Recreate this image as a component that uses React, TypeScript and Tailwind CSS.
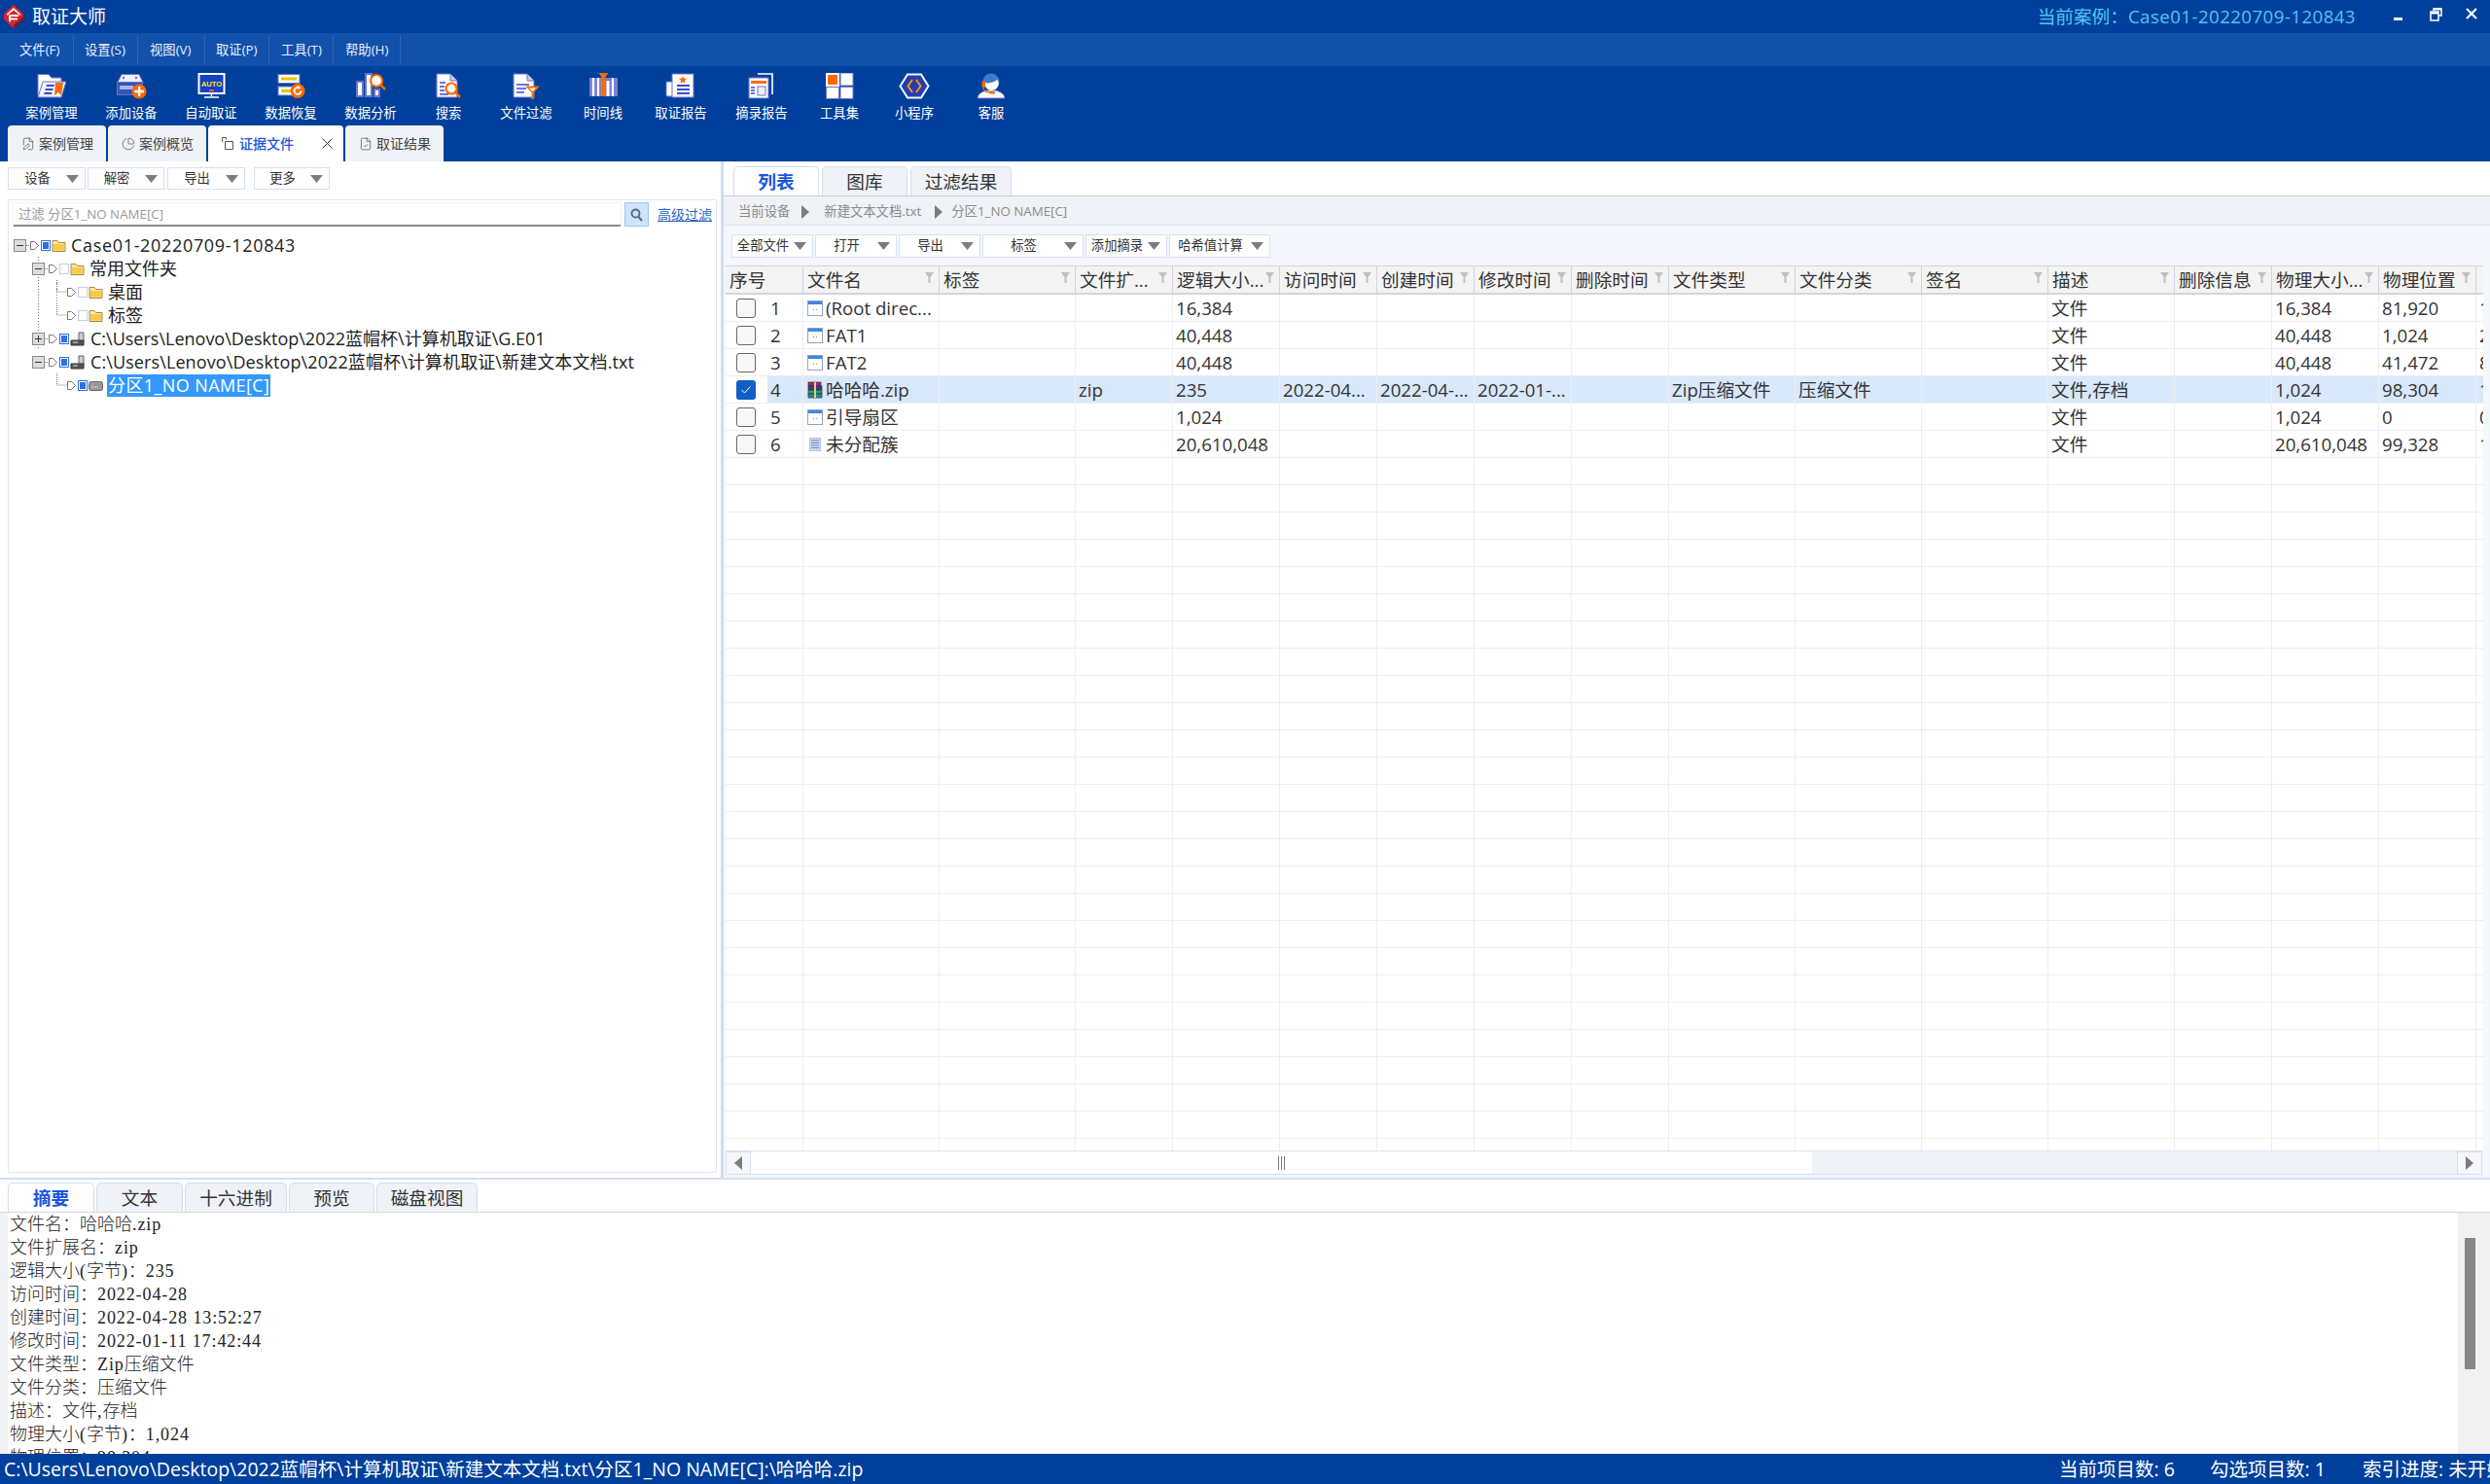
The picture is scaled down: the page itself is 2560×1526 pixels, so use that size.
import React from "react";
import { ChartPie, FilePen, FileCheck, X } from "lucide-react";

const P = "#6b74c8";
const O = "#ff6a00";

function Logo() {
  return (
    <svg width="22" height="24" viewBox="0 0 22 24">
      <path d="M11 0 L21 9 L21 15 L11 24 L1 15 L1 9 Z" fill="#d9232e" />
      <path d="M11 3 L18 9.5 L18 11 L11 5.5 L4 11 L4 9.5 Z" fill="#fff" />
      <path d="M6 10h10v2H8v1.6h7v2H8V18L6 16.4z" fill="#fff" />
      <path d="M11 24 L21 15 L21 12 L11 21Z" fill="#8e1219" />
    </svg>
  );
}

const Ic = ({ children }: { children: React.ReactNode }) => (
  <svg width="32" height="27" viewBox="0 0 32 27" className="shrink-0">{children}</svg>
);

const toolIcons: React.ReactNode[] = [
  <Ic key="1">
    <path d="M2 1.500h11l3 3.500h10v19H2z" fill="#fff" stroke={P} />
    <path d="M7 9h24l-5 16H2z" fill="#f2f3ff" stroke={P} />
    <path d="M11 12h8l-.6 2h-8zM9.800 16h8l-.6 2h-8zM8.600 20h8l-.6 2h-8z" fill="#3a4cd0" />
    <path d="M20 10h8l-2 13-3-3-4 3z" fill={O} />
  </Ic>,
  <Ic key="2">
    <path d="M6 1.500h18l4 8H2z" fill="#eef0fb" stroke={P} />
    <rect x="1.500" y="9.500" width="26" height="13" fill="#3254b8" stroke={P} />
    <rect x="4" y="13" width="14" height="4" fill="#aab4e8" />
    <circle cx="8" cy="5" r="1.200" fill={P} /><circle cx="21" cy="5" r="1.200" fill={P} />
    <circle cx="24" cy="19" r="7.500" fill={O} />
    <path d="M23 14h2.400v3.800H29v2.400h-3.600V24H23v-3.800h-3.600v-2.400H23z" fill="#fff" />
  </Ic>,
  <Ic key="3">
    <rect x="3.500" y="1" width="26" height="20" fill="#1740c8" stroke="#fff" strokeWidth="2" />
    <text x="16.500" y="13.500" textAnchor="middle" fontSize="7.500" fontWeight="700" fill="#ffe600" fontFamily="Liberation Sans, sans-serif">AUTO</text>
    <rect x="14" y="17" width="5" height="2" fill={O} />
    <path d="M16.500 22v2M9 25h15" stroke="#fff" strokeWidth="1.500" />
  </Ic>,
  <Ic key="4">
    <rect x="3" y="1.500" width="22" height="9" fill="#fff" stroke={P} />
    <rect x="6" y="4.500" width="16" height="3" fill="#e3c800" />
    <rect x="3" y="14" width="22" height="9" fill="#fff" stroke={P} />
    <rect x="6" y="17" width="10" height="3" fill="#e3c800" />
    <circle cx="23" cy="18.500" r="7.500" fill={O} />
    <path d="M26.500 18.500a3.500 3.500 0 1 1-2-3.200" fill="none" stroke="#fff" strokeWidth="1.800" />
    <path d="M23 12.500l3.500 3-4 1.200z" fill="#fff" />
  </Ic>,
  <Ic key="5">
    <rect x="2" y="9" width="6" height="15" fill="#fff" stroke={P} strokeWidth="2" />
    <rect x="11" y="1" width="6" height="23" fill="#fff" stroke={P} strokeWidth="2" />
    <rect x="20" y="17" width="5" height="7" fill="#fff" stroke={P} strokeWidth="2" />
    <circle cx="22" cy="8" r="6" fill="#fff" stroke={O} strokeWidth="2.200" />
    <path d="M26.500 12.500L31 17" stroke={O} strokeWidth="2.500" />
  </Ic>,
  <Ic key="6">
    <path d="M4 1h14l7 7v17H4z" fill="#fff" stroke={P} />
    <path d="M18 1v7h7" fill="#c9cdf0" stroke={P} />
    <path d="M7 10h6M7 14h5M7 18h5M7 22h9" stroke="#3a4cd0" strokeWidth="1.500" />
    <circle cx="19" cy="16" r="5.500" fill="#fff" stroke={O} strokeWidth="2.200" />
    <path d="M23 20l5 5" stroke={O} strokeWidth="2.500" />
  </Ic>,
  <Ic key="7">
    <path d="M3 1h14l7 7v17H3z" fill="#fff" stroke={P} />
    <path d="M17 1v7h7" fill="#c9cdf0" stroke={P} />
    <path d="M6 12h13M6 16h10M6 20h8" stroke="#3a4cd0" strokeWidth="1.600" />
    <path d="M15 13.500h15l-6 6.500v7h-2.500v-7z" fill={O} />
    <path d="M19 15.500h7l-3.500 3.500z" fill="#fff" />
  </Ic>,
  <Ic key="8">
    <rect x="2" y="5" width="29" height="19" fill="#7680cc" />
    <path d="M6 5v19M11 5v19M16 5v19M26 5v19" stroke="#fff" strokeWidth="2.200" />
    <path d="M11.500 0h10l-3.500 5h-3z" fill={O} />
    <rect x="15" y="4" width="3" height="20" fill={O} />
    <path d="M21 8v16" stroke="#fff" strokeWidth="3" />
  </Ic>,
  <Ic key="9">
    <rect x="1" y="9" width="8" height="15" rx="1" fill="#fff" stroke={P} />
    <rect x="7" y="1" width="22" height="24" fill="#fff" stroke={P} />
    <path d="M18 3l1.200 2.600 2.800.3-2 1.900.5 2.800-2.500-1.400-2.500 1.400.5-2.800-2-1.900 2.800-.3z" fill={O} />
    <path d="M12 13h13M12 17h13M12 21h13" stroke="#3a4cd0" strokeWidth="1.800" />
  </Ic>,
  <Ic key="10">
    <path d="M12 1h15v21" fill="none" stroke="#fff" strokeWidth="1.600" />
    <rect x="3" y="5" width="20" height="21" fill="#fff" stroke={P} />
    <rect x="5" y="8" width="16" height="3" fill={O} />
    <path d="M5 15h4M5 18h4M5 21h4" stroke="#3a4cd0" strokeWidth="1.600" />
    <rect x="12" y="14" width="8" height="9" fill="#eef" stroke={P} />
  </Ic>,
  <Ic key="11">
    <rect x="3" y="1" width="12" height="12" fill={O} stroke="#fff" strokeWidth="2" />
    <rect x="17" y="0" width="13" height="13" fill="#fff" stroke={P} />
    <rect x="2.500" y="14.500" width="13" height="12" fill="#fff" stroke={P} />
    <rect x="17" y="14.500" width="13" height="12" fill="#fff" stroke={P} />
  </Ic>,
  <Ic key="12">
    <path d="M9 1.500h14l7.500 12-7.500 12H9l-7.500-12z" fill="#2a3bb0" stroke="#e9fbff" strokeWidth="2" />
    <path d="M14 7l-4.500 6.500L14 20M18 7l4.500 6.500L18 20" fill="none" stroke="#f0a010" strokeWidth="1.800" />
  </Ic>,
  <Ic key="13">
    <path d="M2 26c.5-6 7-7 9-8h10c2 1 8.500 2 9 8z" fill="#fff" stroke={P} />
    <circle cx="16" cy="9" r="8.500" fill="#3f79d0" />
    <path d="M10 10c3 1 9 0 12-3 1.500 1 2 3 1.700 5-.5 3-3.500 6-7.700 6s-6.500-4-6-8z" fill="#fff" />
    <rect x="6.500" y="8" width="3.500" height="7" rx="1.500" fill={O} />
    <path d="M8 15c0 4 3 5 7 5" fill="none" stroke={O} strokeWidth="1.300" />
    <rect x="14" y="19" width="6" height="2.500" rx="1" fill={O} />
  </Ic>,
];

const tools = [
  { t: "案例管理", w: "w-[82px]" }, { t: "添加设备", w: "w-[82px]" }, { t: "自动取证", w: "w-[82px]" },
  { t: "数据恢复", w: "w-[82px]" }, { t: "数据分析", w: "w-[82px]" }, { t: "搜索", w: "w-[78px]" },
  { t: "文件过滤", w: "w-[82px]" }, { t: "时间线", w: "w-[76px]" }, { t: "取证报告", w: "w-[84px]" },
  { t: "摘录报告", w: "w-[82px]" }, { t: "工具集", w: "w-[78px]" }, { t: "小程序", w: "w-[76px]" }, { t: "客服", w: "w-[82px]" },
];

const menus = [
  { t: "文件(F)", c: "w-[76px] pl-[20px]" }, { t: "设置(S)", c: "w-[66px] pl-[11px]" }, { t: "视图(V)", c: "w-[69px] pl-[12px]" },
  { t: "取证(P)", c: "w-[66px] pl-[11px]" }, { t: "工具(T)", c: "w-[66px] pl-[12px]" }, { t: "帮助(H)", c: "w-[69px] pl-[12px]" },
];

const Tri = ({ dir = "down" }: { dir?: "down" | "left" | "right" }) => {
  if (dir === "down")
    return <svg width="13" height="8" viewBox="0 0 13 8" className="shrink-0"><path d="M0 0h13L6.500 8z" fill="#7c7c7c" /></svg>;
  if (dir === "right")
    return <svg width="8" height="14" viewBox="0 0 8 14" className="shrink-0"><path d="M0 0l8 7-8 7z" fill="#7c7c7c" /></svg>;
  return <svg width="8" height="14" viewBox="0 0 8 14" className="shrink-0"><path d="M8 0L0 7l8 7z" fill="#7c7c7c" /></svg>;
};

function DropBtn({ t, c }: { t: string; c: string }) {
  return (
    <div className={`flex items-center bg-white border border-[#d6e0f0] text-[13.330px] text-[#333] pr-[6px] ${c}`}>
      <span className="flex-1 text-center whitespace-nowrap">{t}</span>
      <Tri />
    </div>
  );
}

function Folder() {
  return (
    <svg width="15" height="13" viewBox="0 0 15 13" className="shrink-0">
      <path d="M1 1.500h5l1.500 2H14v9H1z" fill="#fde9a0" stroke="#a68a3a" />
      <path d="M2 5h11v6.500H2z" fill="#f8c94e" />
    </svg>
  );
}
function Drive() {
  return (
    <svg width="16" height="15" viewBox="0 0 16 15" className="shrink-0">
      <path d="M9 1h5v9H9z" fill="#c9ccd4" stroke="#666" />
      <path d="M1 9h13v5H1z" fill="#555" stroke="#333" />
      <path d="M3 11h5" stroke="#ddd" />
    </svg>
  );
}
function Part() {
  return (
    <svg width="15" height="13" viewBox="0 0 15 13" className="shrink-0">
      <rect x="0.500" y="2.500" width="14" height="9" rx="2" fill="#9a9a9a" stroke="#666" />
      <path d="M3 8h8" stroke="#eee" strokeDasharray="1 1" />
    </svg>
  );
}

const Check = ({ on }: { on: boolean }) => (
  <span className={`shrink-0 w-[10px] h-[11px] border flex items-center justify-center ${on ? "border-[#2f6fe8]" : "border-[#bcd0f5]"} bg-white`}>
    {on ? <span className="w-[6px] h-[7px] bg-[#2f6fe8]" /> : null}
  </span>
);

function Conn({ level, exp, vlines }: { level: number; exp?: "-" | "+"; vlines: number[] }) {
  // x coordinates below are page coordinates, the svg starts at x = 9
  const ex = 14 + level * 19;
  const ax = level === 2 ? 69 : 31 + level * 19;
  return (
    <svg width={ax + 10 - 9} height="24" viewBox={`9 0 ${ax + 10 - 9} 24`} className="shrink-0">
      {vlines.map((v) => (
        <path key={v} d={`M${v + 0.5} 0V24`} stroke="#777" strokeDasharray="1 2" fill="none" />
      ))}
      {level === 2 ? <path d={`M58.500 0V12H69`} stroke="#777" strokeDasharray="1 1" fill="none" /> : null}
      {exp ? (
        <g>
          <rect x={ex + 0.5} y="6.500" width="12" height="12" fill="#dcdcdc" stroke="#8a8a8a" />
          <path d={`M${ex + 3} 12.500h7`} stroke="#333" />
          {exp === "+" ? <path d={`M${ex + 6.500} 9v7`} stroke="#333" /> : null}
          <path d={`M${ex + 13} 12.500h4`} stroke="#777" strokeDasharray="1 1" />
        </g>
      ) : null}
      <path d={`M${ax + 0.5} 8.500h4l4 4-4 4h-4z`} fill="#fff" stroke="#777" />
    </svg>
  );
}

function TreeRow({ level, exp, on, icon, t, sel, vlines = [], tc = "" }: { level: number; exp?: "-" | "+"; on: boolean; icon: React.ReactNode; t: string; sel?: boolean; vlines?: number[]; tc?: string }) {
  return (
    <div className="h-[24px] flex items-center whitespace-nowrap text-[18px] text-[#222]">
      <Conn level={level} exp={exp} vlines={vlines} />
      <span className="ml-[1px] mr-[1px]"><Check on={on} /></span>
      {icon}
      <span className={`${sel ? "ml-[4px] pl-[1px] pr-[1px] h-[23px] leading-[23px] bg-[#3399ff] text-white" : "ml-[5px]"} ${tc}`}>{t}</span>
    </div>
  );
}

const cols = ["序号", "文件名", "标签", "文件扩...", "逻辑大小...", "访问时间", "创建时间", "修改时间", "删除时间", "文件类型", "文件分类", "签名", "描述", "删除信息", "物理大小...", "物理位置", ""];
const grid = "grid grid-cols-[80px_140px_140px_100px_110px_100px_100px_100px_100px_130px_130px_130px_130px_100px_110px_100px_100px]";

function Funnel() {
  return (
    <svg width="9" height="11" viewBox="0 0 9 11" className="shrink-0 -mt-[4px]"><path d="M0 0h9L5.500 5V11h-2V5z" fill="#c0c0c0" /></svg>
  );
}
function WinIcon() {
  return (
    <svg width="16" height="16" viewBox="0 0 16 16" className="shrink-0">
      <rect x="0.500" y="0.500" width="15" height="15" fill="#fff" stroke="#8da3c8" />
      <rect x="1" y="1" width="14" height="3" fill="#3f86e0" />
      <path d="M6 9h1v1H6zM9 9h1v1H9z" fill="#8a8a8a" />
    </svg>
  );
}
function ZipIcon() {
  return (
    <svg width="16" height="18" viewBox="0 0 16 18" className="shrink-0">
      <rect x="1" y="1" width="13" height="4" fill="#b01e6e" stroke="#333" strokeWidth="0.700" />
      <rect x="1" y="5" width="14" height="4" fill="#2a3eb0" stroke="#333" strokeWidth="0.700" />
      <rect x="1" y="9" width="14" height="4" fill="#2aa05a" stroke="#333" strokeWidth="0.700" />
      <rect x="1" y="13" width="14" height="4" fill="#1b8aa8" stroke="#333" strokeWidth="0.700" />
      <rect x="7" y="1" width="2" height="16" fill="#e8d070" />
    </svg>
  );
}
function UnallocIcon() {
  return (
    <svg width="16" height="16" viewBox="0 0 16 16" className="shrink-0">
      <rect x="2.500" y="1.500" width="11" height="13" fill="#cfd8ee" stroke="#b5c1dc" />
      <path d="M4 4h8M4 6.500h8M4 9h8M4 11.500h8" stroke="#6d86c4" />
    </svg>
  );
}

type Row = { n: number; name: string; icon: React.ReactNode; ext?: string; size: string; at?: string; ct?: string; mt?: string; type?: string; cat?: string; desc: string; ps: string; pp: string; last: string; sel?: boolean };
const rows: Row[] = [
  { n: 1, name: "(Root direc...", icon: <WinIcon />, size: "16,384", desc: "文件", ps: "16,384", pp: "81,920", last: "1" },
  { n: 2, name: "FAT1", icon: <WinIcon />, size: "40,448", desc: "文件", ps: "40,448", pp: "1,024", last: "2" },
  { n: 3, name: "FAT2", icon: <WinIcon />, size: "40,448", desc: "文件", ps: "40,448", pp: "41,472", last: "8" },
  { n: 4, name: "哈哈哈.zip", icon: <ZipIcon />, ext: "zip", size: "235", at: "2022-04...", ct: "2022-04-...", mt: "2022-01-...", type: "Zip压缩文件", cat: "压缩文件", desc: "文件,存档", ps: "1,024", pp: "98,304", last: "1", sel: true },
  { n: 5, name: "引导扇区", icon: <WinIcon />, size: "1,024", desc: "文件", ps: "1,024", pp: "0", last: "0" },
  { n: 6, name: "未分配簇", icon: <UnallocIcon />, size: "20,610,048", desc: "文件", ps: "20,610,048", pp: "99,328", last: "1" },
];

function Cell({ t, sel, last }: { t?: string; sel?: boolean; last?: boolean }) {
  return (
    <div className={`h-[28px] leading-[27px] pl-[3px] border-b border-[#eeeeee] whitespace-nowrap overflow-hidden ${last ? "" : "border-r"} ${sel ? "bg-[#d9e8fb]" : ""}`}>{t}</div>
  );
}

function DataRow({ r }: { r?: Row }) {
  const vals = r ? [r.ext, r.size, r.at, r.ct, r.mt, "", r.type, r.cat, "", r.desc, "", r.ps, r.pp, r.last] : new Array(14).fill("");
  const sel = r?.sel;
  return (
    <div className={grid}>
      <div className="h-[28px] flex border-b border-r border-[#eeeeee]">
        <div className="w-[43px] flex items-center pl-[11px]">
          {r ? (
            r.sel ? (
              <span className="w-[20px] h-[20px] rounded-[3px] bg-[#0f5fc4] flex items-center justify-center">
                <svg width="12" height="10" viewBox="0 0 12 10"><path d="M1.500 5l3 3 6-6.500" fill="none" stroke="#fff" strokeWidth="1" /></svg>
              </span>
            ) : (
              <span className="w-[20px] h-[20px] rounded-[3px] border border-[#666] bg-[#f8f8f8]" />
            )
          ) : null}
        </div>
        <div className={`flex-1 leading-[27px] pl-[3px] ${sel ? "bg-[#d9e8fb]" : ""}`}>{r?.n}</div>
      </div>
      <div className={`h-[28px] flex items-center pl-[4px] gap-[3px] border-b border-r border-[#eeeeee] whitespace-nowrap overflow-hidden ${sel ? "bg-[#d9e8fb]" : ""}`}>
        {r?.icon}
        <span>{r?.name}</span>
      </div>
      <Cell sel={sel} />
      {vals.map((v, i) => (
        <Cell key={i} t={v} sel={sel} last={i === 13} />
      ))}
    </div>
  );
}

function segs(s: string) {
  return s.split(/([\x00-\x7f]+)/).map((p, i) =>
    /^[\x00-\x7f]+$/.test(p) ? (
      <span key={i} className="font-['Liberation_Serif',serif] font-normal tracking-[0.9px] whitespace-pre">{p}</span>
    ) : (
      <span key={i}>{p}</span>
    )
  );
}

const info = [
  "文件名：哈哈哈.zip", "文件扩展名：zip", "逻辑大小(字节)：235", "访问时间：2022-04-28", "创建时间：2022-04-28 13:52:27",
  "修改时间：2022-01-11 17:42:44", "文件类型：Zip压缩文件", "文件分类：压缩文件", "描述：文件,存档", "物理大小(字节)：1,024", "物理位置：98,304",
];

function TopTab({ t, c, active }: { t: string; c: string; active?: boolean }) {
  return (
    <div className={`h-full flex items-center justify-center rounded-t-[5px] border border-b-0 border-[#d3deef] text-[18.670px] ${active ? "bg-white font-bold text-[#1a56e0] -mb-[1px] relative" : "bg-[#eff2f7] text-[#333]"} ${c}`}>{t}</div>
  );
}

export default function App() {
  return (
    <div className="w-[2560px] h-[1526px] flex flex-col overflow-hidden bg-white text-[#333] font-['Open_Sans','Noto_Sans_CJK_SC',sans-serif]">
      {/* title bar */}
      <div className="h-[34px] shrink-0 bg-[#00409c] flex items-center text-white">
        <div className="ml-[3px] w-[22px]"><Logo /></div>
        <span className="ml-[8px] text-[19px] leading-none">取证大师</span>
        <span className="ml-auto text-[18.670px] text-[#54c4f2] whitespace-nowrap">当前案例：<span className="tracking-[0.45px]">Case01-20220709-120843</span></span>
        <div className="ml-[39px] w-[9px] h-[3px] bg-white mt-[4px]" />
        <svg width="13" height="14" viewBox="0 0 13 14" className="ml-[28px] -mt-[4px]">
          <path d="M4 3V1h8v7h-3" fill="none" stroke="#fff" strokeWidth="1.500" />
          <rect x="1" y="4" width="8" height="9" fill="none" stroke="#fff" strokeWidth="1.500" />
          <path d="M1 5.500h8M4 1.500h8" stroke="#fff" strokeWidth="2" />
        </svg>
        <svg width="12" height="12" viewBox="0 0 12 12" className="ml-[24px] mr-[13px] -mt-[6px]">
          <path d="M1 1l10 10M11 1L1 11" stroke="#fff" strokeWidth="2" />
        </svg>
      </div>
      {/* menu */}
      <div className="h-[34px] shrink-0 bg-[#1150ab] flex items-center text-[13.330px] text-[#eaf0fb]">
        {menus.map((m) => (
          <div key={m.t} className={`h-[30px] leading-[30px] border-r border-[#2c64b8] ${m.c}`}>{m.t}</div>
        ))}
      </div>
      {/* toolbar */}
      <div className="h-[61px] shrink-0 bg-[#00409c] flex pl-[12px] text-[13.330px] text-white">
        {tools.map((t, i) => (
          <div key={t.t} className={`flex flex-col items-center pt-[7px] ${t.w}`}>
            {toolIcons[i]}
            <span className="mt-[4px] leading-[20px] whitespace-nowrap">{t.t}</span>
          </div>
        ))}
      </div>
      {/* tabs */}
      <div className="h-[37px] shrink-0 bg-[#00409c] flex items-end pl-[8px] gap-[2px] text-[14px]">
        <div className="h-[37px] w-[101px] rounded-t-[4px] bg-[#eff2f7] flex items-center pl-[14px] gap-[4px] text-[#444]">
          <FilePen size={14} strokeWidth={1.300} color="#555" /><span>案例管理</span>
        </div>
        <div className="h-[37px] w-[101px] rounded-t-[4px] bg-[#eff2f7] flex items-center pl-[14px] gap-[4px] text-[#444]">
          <ChartPie size={14} strokeWidth={1.300} color="#555" /><span>案例概览</span>
        </div>
        <div className="h-[37px] w-[139px] rounded-t-[4px] bg-white flex items-center pl-[14px] gap-[6px] text-[#1a56e0] font-medium">
          <svg width="12" height="13" viewBox="0 0 12 13" className="shrink-0"><path d="M.500 4.500V.500h4v2M3.500 4.500h8v8h-8z" fill="none" stroke="#555" /></svg>
          <span>证据文件</span>
          <X size={19} strokeWidth={1.200} color="#333" className="ml-[19px]" />
        </div>
        <div className="h-[37px] w-[101px] rounded-t-[4px] bg-[#eff2f7] flex items-center pl-[14px] gap-[4px] text-[#444]">
          <FileCheck size={14} strokeWidth={1.300} color="#555" /><span>取证结果</span>
        </div>
      </div>
      {/* main */}
      <div className="h-[1045px] shrink-0 flex">
        {/* left */}
        <div className="w-[741px] shrink-0 flex flex-col pl-[8px] pr-[4px] pt-[6px]">
          <div className="flex h-[23px]">
            <DropBtn t="设备" c="w-[80px]" />
            <DropBtn t="解密" c="w-[79px] ml-[2px]" />
            <DropBtn t="导出" c="w-[80px] ml-[3px]" />
            <DropBtn t="更多" c="w-[78px] ml-[9px]" />
          </div>
          <div className="mt-[10px] h-[1001px] border border-[#dfe7f2] rounded-[2px] flex flex-col">
            <div className="flex h-[25px] mt-[2px] ml-[4px] text-[13.330px]">
              <div className="w-[626px] border-b-[2px] border-[#8c8c8c] border-x border-t border-x-[#eef0f4] border-t-[#eef0f4] rounded-[2px] pl-[5px] leading-[22px] text-[#9a9a9a]">过滤 分区1_NO NAME[C]</div>
              <div className="ml-[3px] w-[25px] bg-[#cfe3fb] border border-[#9cc3ee] flex items-center justify-center">
                <svg width="13" height="14" viewBox="0 0 13 14"><circle cx="5.500" cy="5.500" r="4" fill="none" stroke="#4d6a8c" strokeWidth="1.800" /><path d="M8.500 9l3.500 4" stroke="#4d6a8c" strokeWidth="2" /></svg>
              </div>
              <div className="ml-[9px] text-[14px] leading-[25px] text-[#2a62c8] underline whitespace-nowrap">高级过滤</div>
            </div>
            <div className="mt-[7px]">
              <TreeRow level={0} exp="-" on icon={<Folder />} t="Case01-20220709-120843" tc="tracking-[0.67px]" />
              <TreeRow level={1} exp="-" on={false} icon={<Folder />} t="常用文件夹" vlines={[39]} />
              <TreeRow level={2} on={false} icon={<Folder />} t="桌面" vlines={[39, 58]} />
              <TreeRow level={2} on={false} icon={<Folder />} t="标签" vlines={[39]} />
              <TreeRow level={1} exp="+" on icon={<Drive />} t="C:\Users\Lenovo\Desktop\2022蓝帽杯\计算机取证\G.E01" vlines={[39]} />
              <TreeRow level={1} exp="-" on icon={<Drive />} t="C:\Users\Lenovo\Desktop\2022蓝帽杯\计算机取证\新建文本文档.txt" tc="tracking-[0.1px]" />
              <TreeRow level={2} on icon={<Part />} t="分区1_NO NAME[C]" sel tc="tracking-[0.4px]" />
            </div>
          </div>
        </div>
        {/* splitter */}
        <div className="w-[3px] shrink-0 bg-[#cfdff0]" />
        {/* right */}
        <div className="flex-1 min-w-0 flex flex-col bg-[#f4f7fb]">
          <div className="h-[36px] shrink-0 bg-white flex items-end pl-[10px] gap-[3px] border-b border-[#c8cfe0]">
            <div className="h-[30px] flex gap-[3px]">
              <TopTab t="列表" c="w-[88px]" active />
              <TopTab t="图库" c="w-[88px]" />
              <TopTab t="过滤结果" c="w-[104px]" />
            </div>
          </div>
          <div className="h-[30px] shrink-0 bg-[#eff2f7] border-b border-[#dce6f2] flex items-center pl-[15px] pt-[2px] text-[13.330px] text-[#8a8a8a] whitespace-nowrap">
            <span>当前设备</span>
            <span className="ml-[12px] mr-[15px]"><Tri dir="right" /></span>
            <span>新建文本文档.txt</span>
            <span className="ml-[14px] mr-[9px]"><Tri dir="right" /></span>
            <span>分区1_NO NAME[C]</span>
          </div>
          <div className="h-[41px] shrink-0 flex items-start pt-[9px] pl-[8px] gap-[2px]">
            <DropBtn t="全部文件" c="w-[84px] h-[24px]" />
            <DropBtn t="打开" c="w-[84px] h-[24px]" />
            <DropBtn t="导出" c="w-[84px] h-[24px]" />
            <DropBtn t="标签" c="w-[104px] h-[24px]" />
            <DropBtn t="添加摘录" c="w-[84px] h-[24px]" />
            <DropBtn t="哈希值计算" c="w-[104px] h-[24px]" />
          </div>
          {/* table */}
          <div className="ml-[2px] w-[1807px] h-[910px] shrink-0 overflow-hidden bg-white text-[18.670px] text-[#333] border-t border-[#d3d3e6]">
            <div className="w-[1900px]">
              <div className={`${grid} bg-[#f4f4f4] border-b-[2px] border-[#d3d3e6]`}>
                {cols.map((c, i) => (
                  <div key={i} className="h-[27px] flex items-center justify-between pl-[4px] pr-[5px] border-r border-[#d3d3e6] whitespace-nowrap overflow-hidden">
                    <span>{c}</span>
                    {i > 0 && i < 16 ? <Funnel /> : null}
                  </div>
                ))}
              </div>
              {rows.map((r) => (
                <DataRow key={r.n} r={r} />
              ))}
              {new Array(26).fill(0).map((_, i) => (
                <DataRow key={i} />
              ))}
            </div>
          </div>
          {/* horizontal scroll */}
          <div className="ml-[2px] w-[1806px] h-[25px] shrink-0 flex border-t border-[#dfe3ee] bg-[#eff2f7]">
            <div className="w-[26px] bg-[#f5f7fb] border border-[#d6e0f0] flex items-center justify-center"><Tri dir="left" /></div>
            <div className="w-[1091px] bg-white border-b border-[#d6e0f0] flex items-center justify-center">
              <svg width="7" height="14" viewBox="0 0 7 14"><path d="M.500 0v14M3.500 0v14M6.500 0v14" stroke="#777" /></svg>
            </div>
            <div className="flex-1 border-b border-[#d6e0f0]" />
            <div className="w-[26px] bg-[#f5f7fb] border border-[#d6e0f0] flex items-center justify-center"><Tri dir="right" /></div>
          </div>
        </div>
      </div>
      {/* horizontal splitter */}
      <div className="h-[2px] shrink-0 bg-[#cfdff0]" />
      {/* bottom pane */}
      <div className="h-[282px] shrink-0 flex flex-col">
        <div className="h-[34px] shrink-0 flex items-end pl-[8px] gap-[2px] border-b border-[#d3d3e6]">
          <div className="h-[30px] flex gap-[2px]">
            <TopTab t="摘要" c="w-[89px]" active />
            <TopTab t="文本" c="w-[89px]" />
            <TopTab t="十六进制" c="w-[105px]" />
            <TopTab t="预览" c="w-[88px]" />
            <TopTab t="磁盘视图" c="w-[104px]" />
          </div>
        </div>
        <div className="flex-1 min-h-0 flex overflow-hidden">
          <div className="w-[8px] shrink-0 bg-[#eff2f5]" />
          <div className="flex-1 pl-[2px] -mt-[1px] text-[18px] leading-[24px] font-light text-[#222] overflow-hidden">
            {info.map((l) => (
              <div key={l} className="h-[24px] whitespace-nowrap">{segs(l)}</div>
            ))}
          </div>
          <div className="w-[33px] shrink-0 bg-[#f0f0f0] pl-[7px] pt-[26px]">
            <div className="w-[11px] h-[135px] bg-[#868686]" />
          </div>
        </div>
      </div>
      {/* status */}
      <div className="h-[31px] shrink-0 bg-[#00409c] flex items-center text-white text-[19.500px] whitespace-nowrap overflow-hidden pl-[4px]">
        <span className="w-[2113px] shrink-0">C:\Users\Lenovo\Desktop\2022蓝帽杯\计算机取证\新建文本文档.txt\分区1_NO NAME[C]:\哈哈哈.zip</span>
        <span className="w-[155px] shrink-0">当前项目数: 6</span>
        <span className="w-[157px] shrink-0">勾选项目数: 1</span>
        <span>索引进度: 未开始</span>
      </div>
    </div>
  );
}
